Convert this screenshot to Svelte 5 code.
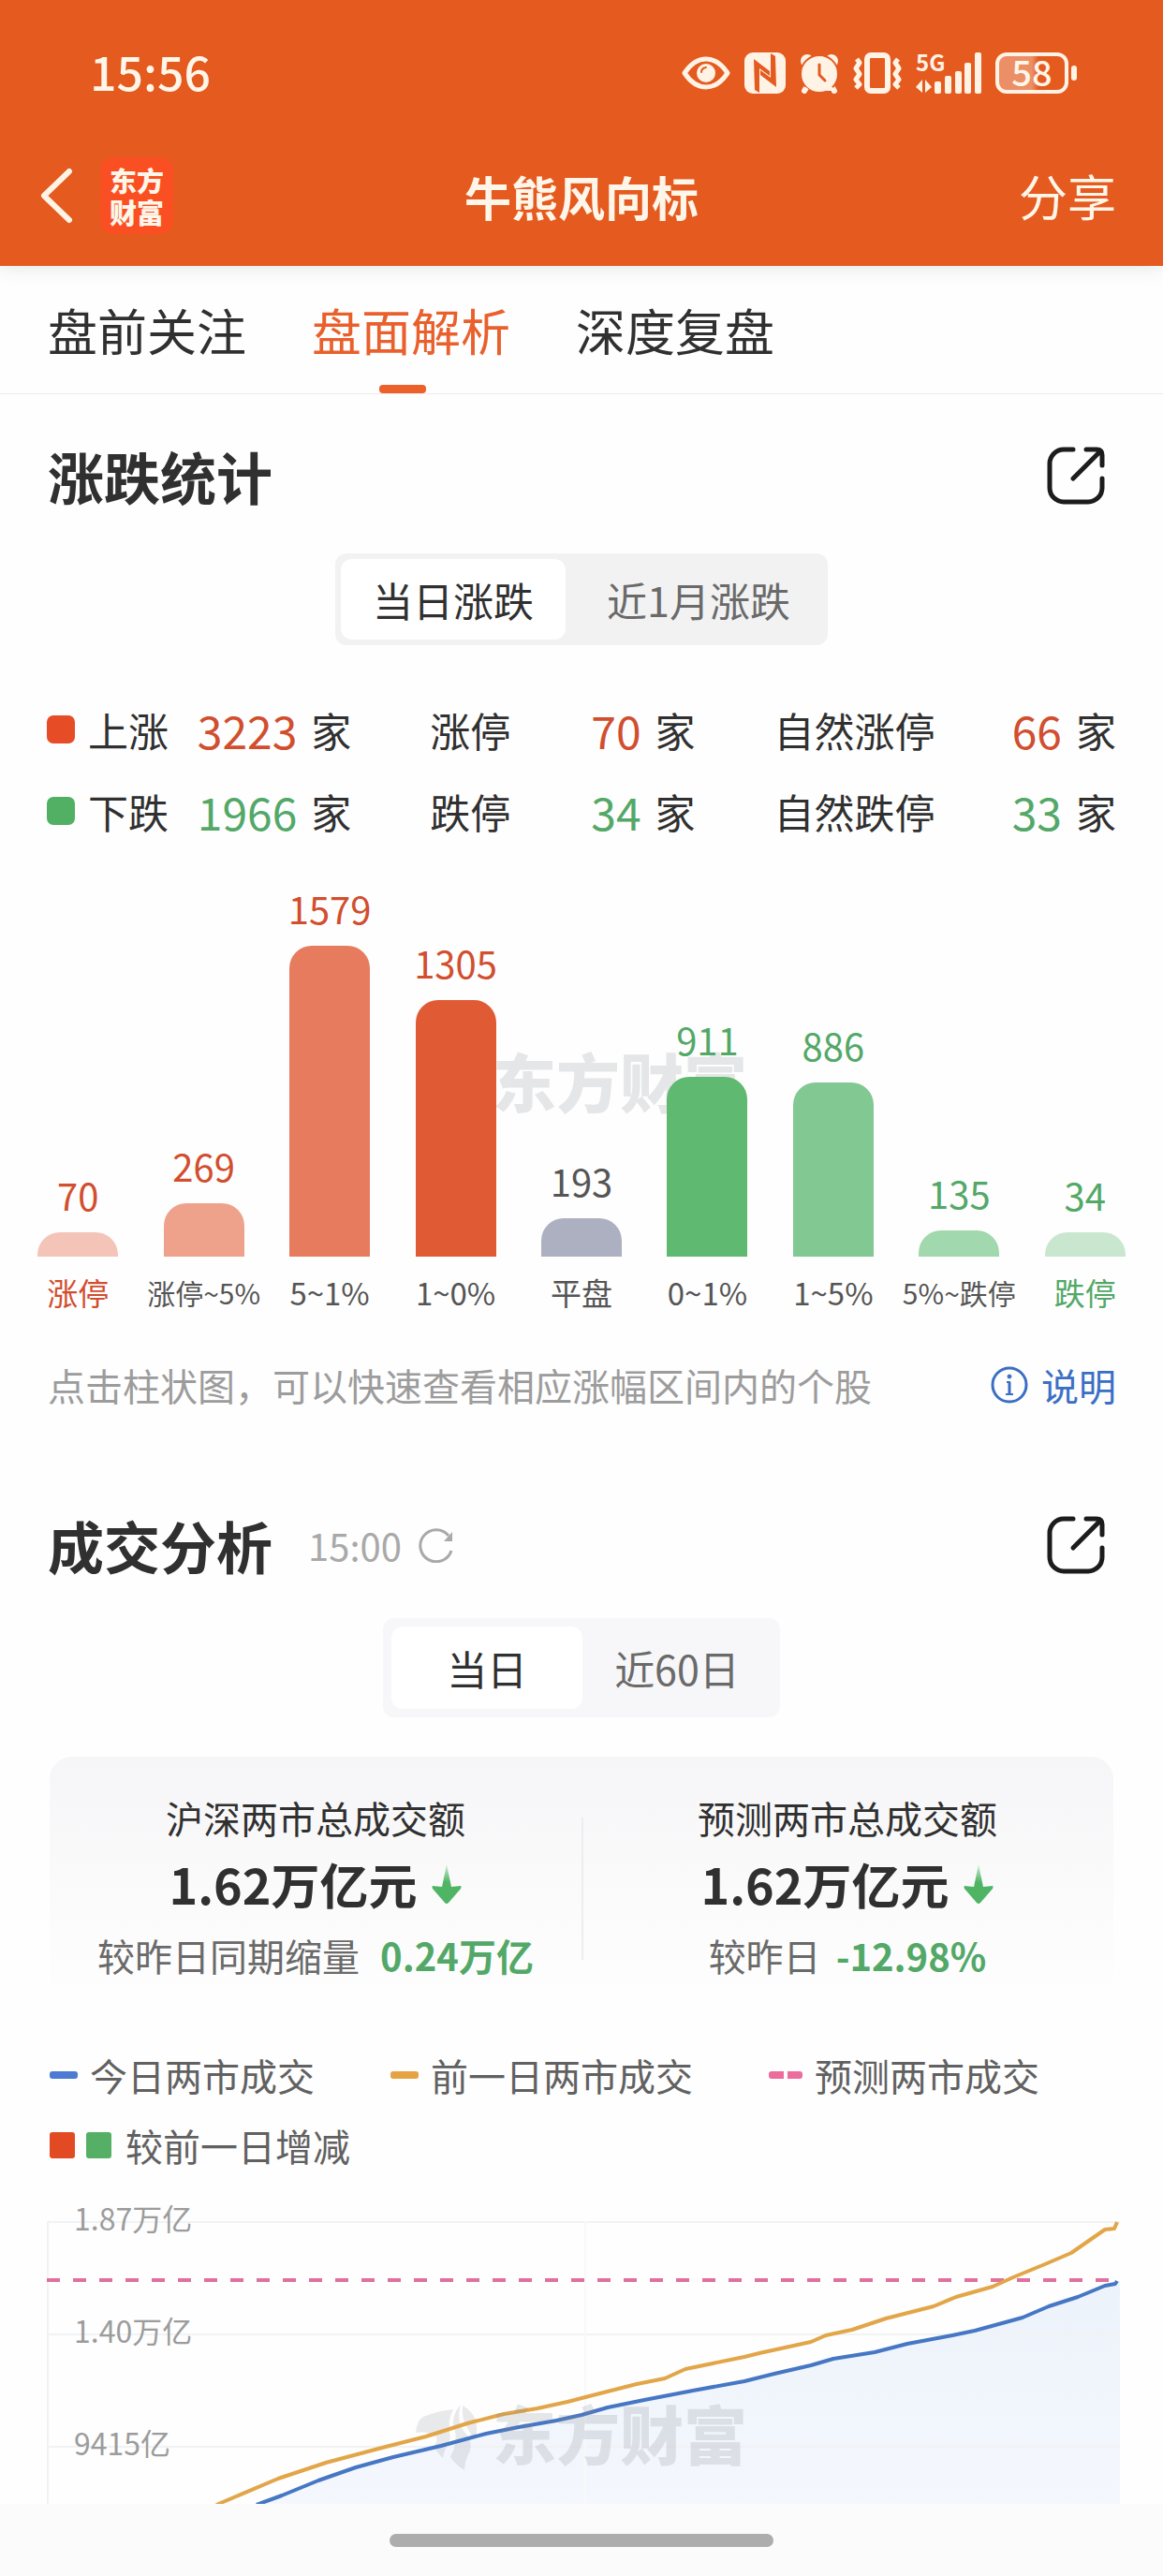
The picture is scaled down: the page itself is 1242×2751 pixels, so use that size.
<script lang="ts">
  interface Bucket {
    label: string;
    count: number;
    color: string;
    tone: 'up' | 'down' | 'flat';
    long?: boolean;
    strong?: boolean;
  }

  const tabs = ['盘前关注', '盘面解析', '深度复盘'];
  let activeTab = 1;
  let riseRange = 0;
  let volumeRange = 0;

  const stats = [
    {
      tone: 'up',
      items: [
        { name: '上涨', value: 3223 },
        { name: '涨停', value: 70 },
        { name: '自然涨停', value: 66 }
      ]
    },
    {
      tone: 'down',
      items: [
        { name: '下跌', value: 1966 },
        { name: '跌停', value: 34 },
        { name: '自然跌停', value: 33 }
      ]
    }
  ];

  const buckets: Bucket[] = [
    { label: '涨停', count: 70, color: '#f4c4b9', tone: 'up', strong: true },
    { label: '涨停~5%', count: 269, color: '#eea28b', tone: 'up', long: true },
    { label: '5~1%', count: 1579, color: '#e67c5d', tone: 'up' },
    { label: '1~0%', count: 1305, color: '#e05a33', tone: 'up' },
    { label: '平盘', count: 193, color: '#adb0c0', tone: 'flat' },
    { label: '0~1%', count: 911, color: '#5fb971', tone: 'down' },
    { label: '1~5%', count: 886, color: '#82c893', tone: 'down' },
    { label: '5%~跌停', count: 135, color: '#a1d8ad', tone: 'down', long: true },
    { label: '跌停', count: 34, color: '#c9e7ce', tone: 'down', strong: true }
  ];

  const maxCount = Math.max(...buckets.map((b) => b.count));
  const barHeight = (count: number) => Math.max(26, Math.round((count / maxCount) * 332));

  const previous =
    '181,303 247,275 298,258 358,242 405,230 449,216 488,206 524,200 556,193 579,187 630,174 660,168 682,158 745,145 761,141 816,129 832,122 860,116 896,104 947,91 971,81 1010,70 1032,60 1066,46 1094,34 1117,18 1130,9 1140,8 1143,1';
  const today =
    '224,303 251,293 290,277 330,263 370,252 421,240 469,227 504,220 544,213 571,207 599,199 638,191 690,181 745,171 777,163 816,154 840,147 884,140 919,131 967,122 991,117 1042,103 1070,91 1101,81 1130,69 1141,67 1143,64';
</script>

{#snippet openIcon()}
  <svg width="62" height="62" viewBox="0 0 62 62" fill="none" stroke="#1c1c1c" stroke-width="5" stroke-linecap="round" stroke-linejoin="round">
    <path d="M28 3H18A15 15 0 0 0 3 18V44A15 15 0 0 0 18 59H44A15 15 0 0 0 59 44V34" />
    <path d="M42 3H53Q59 3 59 9V20M56 6L28 34" />
  </svg>
{/snippet}

{#snippet downArrow()}
  <svg width="32" height="42" viewBox="0 0 32 42">
    <defs>
      <linearGradient id="arrow-fade" x1="0" y1="0" x2="0" y2="1">
        <stop offset="0" stop-color="#4fb565" stop-opacity="0.2" />
        <stop offset="0.45" stop-color="#4fb565" />
      </linearGradient>
    </defs>
    <path d="M16 0L21 24L31 23Q32 24 31 26L18 41Q16 43 14 41L1 26Q0 24 1 23L11 24Z" fill="url(#arrow-fade)" />
  </svg>
{/snippet}

<div class="page">
  <header class="header">
    <div class="status-bar">
      <span class="clock">15:56</span>
      <div class="status-icons">
        <svg width="52" height="36" viewBox="0 0 52 36" fill="none" stroke="#fff3e6">
          <path d="M3 18Q13 3 26 3T49 18Q39 33 26 33T3 18Z" stroke-width="5" stroke-linejoin="round" />
          <circle cx="26" cy="18" r="10" fill="#fff3e6" stroke="none" />
          <path d="M21 17Q21 13 26 12" stroke="#e55a1f" stroke-width="2" stroke-linecap="round" />
        </svg>
        <svg width="44" height="44" viewBox="0 0 44 44">
          <rect width="44" height="44" rx="9" fill="#fff3e6" />
          <g fill="#e55a1f">
            <path d="M10 7L27 20V25L16 17V43L11 40Z" />
            <path d="M34 37L17 24V19L28 27V1L33 4Z" />
          </g>
        </svg>
        <svg width="42" height="44" viewBox="0 0 42 44">
          <circle cx="8" cy="9" r="7" fill="#fff3e6" />
          <circle cx="34" cy="9" r="7" fill="#fff3e6" />
          <path d="M8 36L5 41M34 36L37 41" stroke="#fff3e6" stroke-width="6" stroke-linecap="round" />
          <circle cx="21" cy="23" r="20" fill="#fff3e6" stroke="#e55a1f" stroke-width="2" />
          <path d="M21 39H34L37 42M8 38L5 42" stroke="#fff3e6" stroke-width="4" />
          <path d="M21 13V24L27 30" fill="none" stroke="#e55a1f" stroke-width="3" stroke-linecap="round" />
        </svg>
        <svg width="52" height="44" viewBox="0 0 52 44" fill="none" stroke="#fff3e6">
          <rect x="15" y="3" width="22" height="38" rx="4" stroke-width="6" />
          <path d="M4 7L7 11L3 17L7 23L3 29L7 34L3 38M48 7L45 11L49 17L45 23L49 29L45 34L49 38" stroke-width="5" stroke-linejoin="round" />
        </svg>
        <svg class="signal" width="70" height="44" viewBox="0 0 70 44" fill="#fff3e6">
          <text class="network" x="0" y="20">5G</text>
          <path d="M7 29V43L0 37ZM10 43V29L17 37Z" />
          <rect x="20" y="31" width="7" height="13" rx="2" />
          <rect x="31" y="25" width="7" height="19" rx="2" />
          <rect x="42" y="20" width="7" height="24" rx="2" />
          <rect x="52" y="11" width="7" height="33" rx="2" />
          <rect x="63" y="0" width="7" height="44" rx="2" />
        </svg>
        <div class="battery"><span>58</span></div>
      </div>
    </div>
    <nav class="nav">
      <div class="nav-left">
        <button class="plain" aria-label="返回">
          <svg width="36" height="60" viewBox="0 0 36 60" fill="none" stroke="#fff3e6" stroke-width="6" stroke-linecap="round" stroke-linejoin="round">
            <path d="M31 4L4 30L31 56" />
          </svg>
        </button>
        <div class="logo">
          <span>东方</span>
          <span>财富</span>
        </div>
      </div>
      <h1>牛熊风向标</h1>
      <button class="plain share">分享</button>
    </nav>
  </header>

  <div class="tabs">
    {#each tabs as tab, i}
      <button class="tab" class:active={activeTab === i} on:click={() => (activeTab = i)}>{tab}</button>
    {/each}
  </div>

  <main>
    <section class="rise">
      <div class="section-head">
        <h2>涨跌统计</h2>
        <button class="plain" aria-label="打开涨跌统计">{@render openIcon()}</button>
      </div>

      <div class="segment">
        <button class:active={riseRange === 0} on:click={() => (riseRange = 0)}>当日涨跌</button>
        <button class:active={riseRange === 1} on:click={() => (riseRange = 1)}>近1月涨跌</button>
      </div>

      <div class="stats">
        {#each stats as row}
          <div class="stat-row {row.tone}">
            {#each row.items as item, i}
              <div class="stat">
                {#if i === 0}<i class="swatch"></i>{/if}
                <span>{item.name}</span>
                <b>{item.value}</b>
                <span>家</span>
              </div>
            {/each}
          </div>
        {/each}
      </div>

      <div class="bars">
        <div class="watermark bars-mark">东方财富</div>
        {#each buckets as bucket}
          <button class="bar-col {bucket.tone}">
            <span class="count">{bucket.count}</span>
            <span class="bar" style="height: {barHeight(bucket.count)}px; background: {bucket.color}"></span>
            <span class="label" class:long={bucket.long} class:strong={bucket.strong}>{bucket.label}</span>
          </button>
        {/each}
      </div>

      <div class="note">
        <span>点击柱状图，可以快速查看相应涨幅区间内的个股</span>
        <a href="#help">
          <svg width="40" height="40" viewBox="0 0 40 40" fill="none" stroke="#3b6fc4" stroke-width="3">
            <circle cx="20" cy="20" r="18" />
            <path d="M17 17H20V30M16 30H24" stroke-width="2" />
            <path d="M20 17V30" />
            <circle cx="20" cy="11" r="2" fill="#3b6fc4" stroke-width="1" />
          </svg>
          说明
        </a>
      </div>
    </section>

    <section class="volume">
      <div class="section-head">
        <h2>成交分析</h2>
        <span class="time">15:00</span>
        <button class="plain refresh" aria-label="刷新">
          <svg width="38" height="38" viewBox="0 0 38 38" fill="none" stroke="#a9a9a9" stroke-width="3">
            <path d="M35 25A17 17 0 1 1 32 9" />
            <path d="M36 5V15H27Z" fill="#a9a9a9" stroke="none" />
          </svg>
        </button>
        <button class="plain" aria-label="打开成交分析">{@render openIcon()}</button>
      </div>

      <div class="segment light">
        <button class:active={volumeRange === 0} on:click={() => (volumeRange = 0)}>当日</button>
        <button class:active={volumeRange === 1} on:click={() => (volumeRange = 1)}>近60日</button>
      </div>

      <div class="card">
        <div class="total">
          <span class="total-name">沪深两市总成交额</span>
          <strong>1.62万亿元 {@render downArrow()}</strong>
          <span class="compare wide">较昨日同期缩量 <b>0.24万亿</b></span>
        </div>
        <div class="total">
          <span class="total-name">预测两市总成交额</span>
          <strong>1.62万亿元 {@render downArrow()}</strong>
          <span class="compare">较昨日 <b>-12.98%</b></span>
        </div>
      </div>

      <div class="legend">
        <span><i class="dash blue"></i>今日两市成交</span>
        <span><i class="dash orange"></i>前一日两市成交</span>
        <span><i class="dash pink"></i>预测两市成交</span>
        <span><i class="square red"></i><i class="square green"></i>较前一日增减</span>
      </div>

      <div class="line-chart">
        <svg class="plot" viewBox="0 0 1146 302" preserveAspectRatio="none" fill="none">
          <defs>
            <linearGradient id="area-fade" x1="0" y1="0" x2="0" y2="1">
              <stop offset="0" stop-color="#edf3fb" />
              <stop offset="1" stop-color="#f4f7fd" />
            </linearGradient>
          </defs>
          <polygon points="{today} 1146,64 1146,303" fill="url(#area-fade)" />
          <path d="M0 1H1146M0 121H1146M0 241H1146M1 0V302" stroke="#f1f2f4" stroke-width="2" />
          <path d="M575 0V302" stroke="#f7f8fa" stroke-width="2" />
          <g fill="#9a9ea8" fill-opacity="0.22">
            <path d="M394 226Q395 213 402 209Q416 203 434 201Q427 214 431 232Q425 242 423 253Q417 248 413 240Q418 236 416 230Q406 224 394 226Z" />
            <path d="M442 196Q431 208 435 221Q440 235 431 252Q436 260 446 266Q446 256 452 245Q455 235 446 225Q437 214 442 196Z" />
            <path d="M444 197Q458 205 459 219Q460 230 455 233Q452 225 448 219Q443 211 444 197Z" />
          </g>
          <path d="M0 63H1146" stroke="#e0709d" stroke-width="4" stroke-dasharray="14 14" />
          <polyline points={previous} stroke="#e2a548" stroke-width="4" stroke-linejoin="round" />
          <polyline points={today} stroke="#4677c4" stroke-width="4" stroke-linejoin="round" />
        </svg>
        <div class="y-axis">
          <span>1.87万亿</span>
          <span>1.40万亿</span>
          <span>9415亿</span>
        </div>
        <div class="watermark line-mark">东方财富</div>
      </div>
    </section>
  </main>

  <footer class="home"><i></i></footer>
</div>

<style>
  :global(body) {
    background: #fefefe;
  }

  .page {
    font-family: 'Noto Sans CJK SC', sans-serif;
    color: #303030;
    font-size: 40px;
  }

  button {
    border: 0;
    padding: 0;
    background: none;
    font: inherit;
    color: inherit;
    cursor: pointer;
  }

  svg {
    display: block;
    flex: none;
  }

  h1,
  h2 {
    margin: 0;
  }

  .header {
    position: relative;
    padding-bottom: 22px;
    background: #e55a1f;
    color: #fff6ea;
    box-shadow: 0 2px 20px rgba(40, 60, 50, 0.12);
  }

  .status-bar {
    display: flex;
    align-items: center;
    justify-content: space-between;
    height: 156px;
    padding: 0 92px 0 96px;
  }

  .clock {
    padding-bottom: 6px;
    font-size: 50px;
    font-weight: 500;
    line-height: 52px;
  }

  .status-icons {
    display: flex;
    align-items: center;
    gap: 15px;
  }

  .signal {
    overflow: visible;
  }

  .network {
    font-size: 24px;
    font-weight: 700;
  }

  .battery {
    display: flex;
    align-items: center;
  }

  .battery span {
    box-sizing: border-box;
    width: 78px;
    height: 44px;
    border: 4px solid #fff3e6;
    border-radius: 12px;
    background: linear-gradient(90deg, #ec8f66 50%, transparent 60%);
    font-size: 38px;
    font-weight: 500;
    line-height: 32px;
    text-align: center;
  }

  .battery::after {
    content: '';
    width: 6px;
    height: 16px;
    margin-left: 3px;
    border-radius: 3px;
    background: #fff3e6;
  }

  .nav {
    display: grid;
    grid-template-columns: 1fr auto 1fr;
    align-items: center;
    height: 106px;
    padding: 0 50px;
  }

  .nav-left {
    display: flex;
    align-items: center;
    gap: 28px;
    margin-left: -7px;
  }

  .logo {
    display: grid;
    align-content: center;
    justify-content: center;
    width: 78px;
    height: 82px;
    border-radius: 14px;
    background: #fa4f22;
    font-size: 29px;
    font-weight: 900;
    line-height: 34px;
  }

  h1 {
    font-size: 50px;
    line-height: 60px;
  }

  .share {
    justify-self: end;
    font-size: 52px;
    line-height: 60px;
  }

  .tabs {
    display: flex;
    gap: 70px;
    height: 136px;
    padding: 0 51px;
    border-bottom: 1px solid #ececec;
  }

  .tab {
    position: relative;
    font-size: 53px;
    white-space: nowrap;
  }

  .tab.active {
    color: #e9602c;
  }

  .tab.active::after {
    content: '';
    position: absolute;
    bottom: 0;
    left: 50%;
    width: 50px;
    height: 9px;
    margin-left: -34px;
    border-radius: 4px;
    background: #ee602a;
  }

  .rise {
    padding-top: 56px;
  }

  .volume {
    padding-top: 118px;
  }

  .section-head {
    display: flex;
    align-items: center;
    height: 62px;
    padding: 0 62px 0 51px;
  }

  .section-head > :last-child {
    margin-left: auto;
  }

  h2 {
    font-size: 60px;
    line-height: 60px;
  }

  .time {
    margin-left: 38px;
    color: #a9a9a9;
    line-height: 44px;
  }

  .refresh {
    margin-left: 18px;
  }

  .segment {
    display: flex;
    gap: 10px;
    width: fit-content;
    margin: 52px auto 0;
    padding: 6px;
    border-radius: 12px;
    background: #f2f2f3;
    font-size: 43px;
    line-height: 86px;
  }

  .segment button {
    padding: 0 34px;
    border-radius: 12px;
    color: #6a6a6a;
  }

  .segment button.active {
    background: #fff;
    color: #303030;
  }

  .segment.light {
    gap: 0;
    margin-top: 47px;
    padding: 9px;
    background: #f7f7f9;
    line-height: 88px;
  }

  .segment.light button.active {
    padding: 0 59px;
  }

  .stats {
    display: grid;
    gap: 39px;
    padding: 66px 50px 0;
    font-size: 43px;
    line-height: 48px;
  }

  .stat-row {
    display: grid;
    grid-template-columns: 325fr 283fr 365fr;
    gap: 84px;
  }

  .stat {
    display: flex;
    align-items: center;
    white-space: nowrap;
  }

  .stat b {
    margin: 0 15px 0 auto;
    font-size: 48px;
    font-weight: 400;
  }

  .swatch {
    width: 30px;
    height: 30px;
    margin-right: 14px;
    border-radius: 7px;
  }

  .up .swatch {
    background: #e64c25;
  }

  .down .swatch {
    background: #52b064;
  }

  .up b,
  .up .count,
  .up .strong {
    color: #d14e2e;
  }

  .down b,
  .down .count,
  .down .strong {
    color: #53a868;
  }

  .bars {
    position: relative;
    display: grid;
    grid-template-columns: repeat(9, 1fr);
    align-items: end;
    height: 509px;
    padding: 0 16px;
  }

  .bar-col {
    position: relative;
    display: flex;
    flex-direction: column;
    align-items: center;
    color: #555;
    white-space: nowrap;
  }

  .count {
    margin-bottom: 20px;
    line-height: 40px;
  }

  .bar {
    width: 86px;
    border-radius: 24px 24px 0 0;
  }

  .label {
    margin-top: 19px;
    font-size: 33px;
    line-height: 38px;
  }

  .label.long {
    font-size: 30px;
  }

  .watermark {
    font-size: 68px;
    font-weight: 900;
    line-height: 72px;
    color: rgba(130, 134, 145, 0.2);
  }

  .bars-mark {
    position: absolute;
    top: 228px;
    left: 50%;
    margin-left: -95px;
  }

  .note {
    display: flex;
    justify-content: space-between;
    padding: 58px 50px 0 51px;
    color: #9c9c9c;
    line-height: 44px;
  }

  .note a {
    display: flex;
    align-items: center;
    gap: 14px;
    color: #3b6fc4;
    text-decoration: none;
  }

  .card {
    display: grid;
    grid-template-columns: 1fr 1fr;
    margin: 42px 53px 0;
    padding: 41px 0 28px;
    border-radius: 24px;
    background: linear-gradient(#f6f6f8, #fefefe);
    line-height: 48px;
  }

  .total {
    display: flex;
    flex-direction: column;
    align-items: center;
  }

  .total + .total {
    background: linear-gradient(#ededf0, #ededf0) left 24px / 2px 152px no-repeat;
  }

  .total strong {
    display: flex;
    align-items: center;
    gap: 16px;
    margin: 15px 0 20px;
    font-size: 52px;
    line-height: 64px;
  }

  .compare {
    display: flex;
    gap: 16px;
    color: #6a6a6a;
  }

  .compare.wide {
    gap: 22px;
  }

  .compare b {
    color: #53a868;
  }

  .legend {
    display: flex;
    flex-wrap: wrap;
    gap: 31px 81px;
    padding: 54px 53px 0;
    color: #616161;
    line-height: 44px;
  }

  .legend span {
    display: flex;
    align-items: center;
  }

  .dash {
    width: 30px;
    height: 8px;
    margin-right: 13px;
    border-radius: 3px;
  }

  .blue {
    background: #4d7ad2;
  }

  .orange {
    background: #e5a344;
  }

  .pink {
    width: 36px;
    background: linear-gradient(90deg, #ec6c9d 16px, transparent 16px 20px, #ec6c9d 20px);
  }

  .square {
    width: 27px;
    height: 28px;
    margin-right: 12px;
    border-radius: 3px;
  }

  .red {
    background: #e24a24;
  }

  .green {
    margin-right: 15px;
    background: #55b066;
  }

  .line-chart {
    position: relative;
    height: 302px;
    margin: 59px 46px 0 50px;
  }

  .plot {
    width: 100%;
    height: 302px;
  }

  .y-axis {
    position: absolute;
    top: -24px;
    left: 29px;
    display: grid;
    gap: 80px;
    color: #9c9c9c;
    font-size: 32px;
    line-height: 40px;
  }

  .line-mark {
    position: absolute;
    top: 190px;
    left: 50%;
    margin-left: -97px;
  }

  .home {
    display: flex;
    justify-content: center;
    padding: 32px 0 31px;
    background: #fbfbfb;
  }

  .home i {
    width: 33%;
    height: 14px;
    border-radius: 7px;
    background: #adadad;
  }
</style>
